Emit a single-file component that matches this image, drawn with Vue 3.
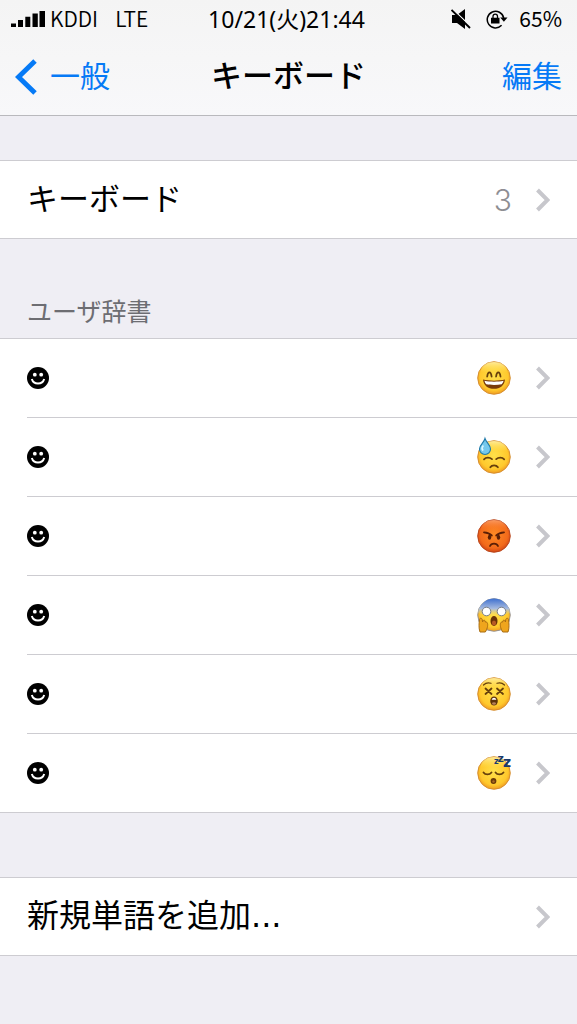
<template>
  <div class="screen">
    <header class="top">
      <div class="status">
        <div class="status-left">
          <svg class="signal" viewBox="0 0 34 16" aria-hidden="true">
            <path d="M0 12.5h5V16H0zM7 9h5v7H7zM14.3 5.700h5V16h-5zM21.500 2.500h5.300V16h-5.300zM28.500 0H34v16h-5.500z" />
          </svg>
          <span class="carrier">KDDI</span>
          <span class="carrier">LTE</span>
        </div>
        <time class="clock">10/21(火)21:44</time>
        <div class="status-right">
          <svg class="mute" viewBox="0 0 20 20" role="img" aria-label="消音">
            <path d="M1 6h5l8-6v20l-8-6H1z" />
            <path d="M1.500 0l19 18" stroke="#f6f6f6" stroke-width="1.300" />
            <path d="M0.500 1l18.500 18" stroke="#000" stroke-width="1.900" />
          </svg>
          <svg class="lock" viewBox="0 0 22 20" role="img" aria-label="画面の向きをロック">
            <path d="M15.600 16.300A8.300 8.300 0 1 1 17.700 9" fill="none" stroke="#000" stroke-width="1.500" />
            <path d="M14.200 8.400h7.300l-3.600 4.300zM5 8.700h8.500v5.800H5z" />
            <path d="M7 9V7.300a2.250 2.250 0 0 1 4.500 0V9" fill="none" stroke="#000" stroke-width="1.300" />
          </svg>
          <span class="battery">65%</span>
        </div>
      </div>
      <nav class="nav">
        <a class="back" href="#general">
          <svg viewBox="0 0 22 36" aria-hidden="true">
            <path d="M20 2L3.500 18 20 34" fill="none" stroke="#067af6" stroke-width="5" />
          </svg>
          <span>一般</span>
        </a>
        <h1>キーボード</h1>
        <button class="edit" type="button">編集</button>
      </nav>
    </header>

    <main>
      <ul class="list">
        <li>
          <a class="row" href="#keyboards">
            <span class="label">キーボード</span>
            <span class="count">3</span>
            <svg class="chevron" viewBox="0 0 14 24" aria-hidden="true"><path d="M1.500 2l10 10-10 10" /></svg>
          </a>
        </li>
      </ul>

      <h2>ユーザ辞書</h2>
      <ul class="list words">
        <li v-for="word in words" :key="word.kind">
          <a class="row" href="#word" :aria-label="word.name">
            <svg class="smiley" viewBox="0 0 22 22" aria-hidden="true">
              <circle cx="11" cy="11" r="11" />
              <circle cx="7.800" cy="7.700" r="1.900" fill="#fff" />
              <circle cx="14.200" cy="7.700" r="1.900" fill="#fff" />
              <path d="M4.800 12c1.800 6 10.600 6 12.400 0" fill="none" stroke="#fff" stroke-width="2" />
            </svg>
            <span class="spacer"></span>
            <svg class="emoji" viewBox="0 0 36 36" aria-hidden="true">
              <defs>
                <radialGradient :id="'face-' + word.kind" cx="50%" cy="45%" r="56%">
                  <stop offset="0" :stop-color="word.colors[0]" />
                  <stop offset="0.750" :stop-color="word.colors[1]" />
                  <stop offset="1" :stop-color="word.colors[2]" />
                </radialGradient>
                <linearGradient :id="'shade-' + word.kind" x1="0" y1="0" x2="0" y2="1">
                  <stop offset="0" :stop-color="word.shade[0]" />
                  <stop offset="0.600" :stop-color="word.shade[1]" />
                </linearGradient>
              </defs>
              <circle cx="18" cy="18" r="16.300" :fill="`url(#face-${word.kind})`" :stroke="word.edge" stroke-width="0.900" />
              <ellipse cx="18" cy="10.500" rx="13" ry="8.500" :fill="`url(#shade-${word.kind})`" />

              <g v-if="word.kind === 'grin'">
                <path class="line" d="M11.200 16.500c.7-5.500 3.700-5.500 4.400 0M20.100 16.500c.7-5.500 3.700-5.500 4.400 0" />
                <path d="M7 19.500c6 1.500 16 1.500 22 0-.5 6-5 9.300-11 9.300s-10.500-3.300-11-9.300z" fill="#7a3c0a" />
                <path d="M8.500 20.800c5.500 1.200 13.500 1.200 19 0-.4 1.700-1 2.700-1.800 3.500-4.500.8-11 .8-15.400 0-.9-.9-1.500-1.900-1.800-3.500z" fill="#fff" />
              </g>

              <g v-else-if="word.kind === 'sweat'">
                <path class="line" d="M8 20.300c2-2.200 5.800-2 8-.2M20.200 20.100c2.200-1.800 6-2 8 .2M14.300 28.300c1.600-2.700 6-2.700 7.600 0" />
                <path d="M9 -0.500c1.300 4 5.500 6.500 5.500 10.400A5.500 5.500 0 0 1 9 15.500a5.500 5.500 0 0 1-5.500-5.600C3.500 6 7.900 4 9 -.5z" fill="#75c8ed" stroke="#1d78a8" stroke-width="1.100" />
                <path d="M7.300 6.500c-1.600 2.200-1.600 4 0 5" fill="none" stroke="#d9f5ff" stroke-width="1.800" />
              </g>

              <g v-else-if="word.kind === 'angry'">
                <path class="line angry" d="M8 14.300c3 .2 5.800 1.200 7.800 3.200M28 14.300c-3 .2-5.800 1.200-7.800 3.200M14 28c1.300-3.300 6.700-3.300 8 0" />
                <ellipse cx="13.500" cy="19.300" rx="1.700" ry="2.500" fill="#5b1f06" />
                <ellipse cx="22.500" cy="19.300" rx="1.700" ry="2.500" fill="#5b1f06" />
              </g>

              <g v-else-if="word.kind === 'scream'">
                <path d="M1.900 16a16.200 16.200 0 0 1 32.200 0c-6 3.500-26 3.500-32.200 0z" fill="url(#fear)" />
                <circle cx="10.500" cy="14.500" r="4.300" fill="#fff" stroke="#777c86" stroke-width="1" />
                <circle cx="25.500" cy="14.500" r="4.300" fill="#fff" stroke="#777c86" stroke-width="1" />
                <ellipse cx="18" cy="24" rx="3.500" ry="5" fill="#6b3307" />
                <ellipse cx="18" cy="26" rx="2.100" ry="2.500" fill="#b85b25" />
                <path d="M4 35C2.500 31 3 26 3.500 22.500c.4-2 2.700-1.500 2.800.5l.3 2c.5-2.500 2.800-2.300 2.700 0 2.700-.5 2.700 3 2 5.500-.3 1.700-1 3-2 4.500zM32 35c1.500-4 1-9 .5-12.500-.4-2-2.700-1.500-2.800.5l-.3 2c-.5-2.500-2.800-2.300-2.700 0-2.700-.5-2.700 3-2 5.500.3 1.700 1 3 2 4.500z" fill="#efa51d" stroke="#a86c12" stroke-width="1" />
              </g>

              <g v-else-if="word.kind === 'dizzy'">
                <path class="line" d="M9.500 12.500l6 5.500M15.500 12.500l-6 5.500M21 12.500l6 5.500M27 12.500l-6 5.500" />
                <path class="line thin" d="M7.500 9c2-2 5-2.600 7.500-1.700M28.500 9c-2-2-5-2.600-7.500-1.700" />
                <ellipse cx="18" cy="25" rx="3.800" ry="4.500" fill="#5e3309" />
                <path d="M15.700 23.800c.5-2.700 4.100-2.700 4.600 0z" fill="#fff" />
                <ellipse cx="18" cy="27.500" rx="2" ry="1.200" fill="#b9825a" />
              </g>

              <g v-else>
                <path class="line" d="M7.500 17.500c1.800 2.600 6 2.600 8 0M19.500 17.500c1.800 2.600 6 2.600 8 0" />
                <circle cx="17.500" cy="26" r="2.900" fill="#6b3a09" />
                <circle cx="17.500" cy="26.500" r="1.200" fill="#a96924" />
                <g class="zzz">
                  <text x="18" y="9" font-size="8">z</text>
                  <text x="21.500" y="7" font-size="11">z</text>
                  <text x="27" y="12" font-size="14">z</text>
                </g>
              </g>
            </svg>
            <svg class="chevron" viewBox="0 0 14 24" aria-hidden="true"><path d="M1.500 2l10 10-10 10" /></svg>
          </a>
        </li>
      </ul>

      <ul class="list add">
        <li>
          <a class="row" href="#add">
            <span class="label long">新規単語を追加<span class="dots">...</span></span>
            <svg class="chevron" viewBox="0 0 14 24" aria-hidden="true"><path d="M1.500 2l10 10-10 10" /></svg>
          </a>
        </li>
      </ul>
    </main>

    <!-- blue forehead of the scream face -->
    <svg class="defs" aria-hidden="true">
      <linearGradient id="fear" x1="0" y1="0" x2="0" y2="1">
        <stop offset="0" stop-color="#3f70cf" />
        <stop offset="0.600" stop-color="#a9bde0" />
        <stop offset="1" stop-color="#f4d469" stop-opacity="0" />
      </linearGradient>
    </svg>
  </div>
</template>

<script setup>
const yellow = ['#ffe04a', '#ffc92d', '#ee9820']
const light = ['rgba(255, 250, 200, 0.7)', 'rgba(255, 240, 120, 0)']

const words = [
  { kind: 'grin', name: '笑顔', colors: yellow, shade: light, edge: '#d28a2c' },
  { kind: 'sweat', name: '冷や汗', colors: yellow, shade: light, edge: '#d28a2c' },
  {
    kind: 'angry',
    name: '怒り',
    colors: ['#ff8a24', '#f26a1b', '#cf4314'],
    shade: ['rgba(255, 190, 150, 0.6)', 'rgba(255, 120, 40, 0)'],
    edge: '#b44219'
  },
  { kind: 'scream', name: '恐怖', colors: yellow, shade: light, edge: '#8f9096' },
  { kind: 'dizzy', name: 'めまい', colors: yellow, shade: light, edge: '#d28a2c' },
  { kind: 'sleep', name: '睡眠', colors: yellow, shade: light, edge: '#d28a2c' }
]
</script>

<style>
body {
  margin: 0;
  background: #efeef4;
}
</style>

<style scoped>
.screen {
  min-height: 100vh;
  background: #efeef4;
  color: #000;
  font-family: "Noto Sans CJK JP", sans-serif;
}

.top {
  background: linear-gradient(#f4f4f4, #f8f8fa);
  border-bottom: 1px solid #b9b9bd;
}

.status,
.nav {
  display: grid;
  grid-template-columns: 1fr auto 1fr;
  align-items: center;
}

.status {
  height: 38px;
  padding: 0 15px 0 11px;
  font-size: 21px;
  line-height: 30px;
}

.status-left,
.status-right {
  display: flex;
  align-items: center;
}

.status-left {
  gap: 5px;
}

.carrier,
.battery {
  padding-bottom: 2px;
}

.carrier {
  font-weight: 350;
}

.carrier + .carrier {
  margin-left: 12px;
}

.status-right {
  justify-content: flex-end;
}

.signal {
  width: 34px;
  height: 16px;
}

.clock {
  font-family: "Noto Sans", "Noto Sans CJK JP", sans-serif;
  font-size: 23px;
}

.mute {
  width: 20px;
  height: 20px;
  margin-right: 15px;
}

.lock {
  width: 22px;
  height: 20px;
  margin-right: 11px;
}

.nav {
  height: 77px;
  padding: 0 15px;
  font-size: 30px;
  line-height: 40px;
}

.back {
  display: flex;
  align-items: center;
  gap: 13px;
  color: #067af6;
  text-decoration: none;
}

.back span,
h1,
.edit,
.label {
  padding-bottom: 5px;
}

.back svg {
  width: 22px;
  height: 36px;
}

h1 {
  margin: 0;
  font-size: 31px;
  font-weight: 500;
}

.edit {
  justify-self: end;
  padding: 0 0 5px;
  border: 0;
  background: none;
  color: #067af6;
  font: inherit;
  cursor: pointer;
}

.list {
  margin: 44px 0 0;
  padding: 0;
  list-style: none;
  background: #fff;
  border-top: 1px solid #cdccd1;
  border-bottom: 1px solid #cdccd1;
}

.row {
  display: flex;
  align-items: center;
  height: 77px;
  padding: 0 27px;
  color: inherit;
  text-decoration: none;
}

.label {
  flex: 1;
  font-size: 31px;
  line-height: 40px;
}

.label.long {
  font-size: 32px;
}

.dots {
  font-family: "DejaVu Sans", sans-serif;
}

.count {
  color: #8e8e93;
  font-family: Inter, sans-serif;
  font-size: 30px;
  font-weight: 300;
  line-height: 40px;
}

.chevron {
  width: 14px;
  height: 24px;
  margin-left: 24px;
}

.chevron path {
  fill: none;
  stroke: #c7c7cc;
  stroke-width: 4;
}

h2 {
  margin: 0;
  padding: 53px 27px 10px;
  color: #6d6d72;
  font-size: 25px;
  font-weight: 400;
  line-height: 36px;
}

.words {
  margin-top: 0;
}

.words .row {
  height: 78px;
}

.words li + li .row {
  margin-left: 27px;
  padding-left: 0;
  border-top: 1px solid #cdccd1;
}

.add {
  margin-top: 64px;
}

.smiley {
  width: 22px;
  height: 22px;
}

.spacer {
  flex: 1;
}

.emoji {
  width: 36px;
  height: 36px;
  overflow: visible;
}

.line {
  fill: none;
  stroke: #67400c;
  stroke-width: 1.8px;
  stroke-linecap: round;
}

.angry {
  stroke: #5b1f06;
}

.thin {
  stroke-width: 1.2px;
}

.zzz {
  fill: #173a6d;
  font-family: "DejaVu Sans", sans-serif;
  font-weight: 700;
}

.defs {
  display: block;
  width: 0;
  height: 0;
}
</style>
